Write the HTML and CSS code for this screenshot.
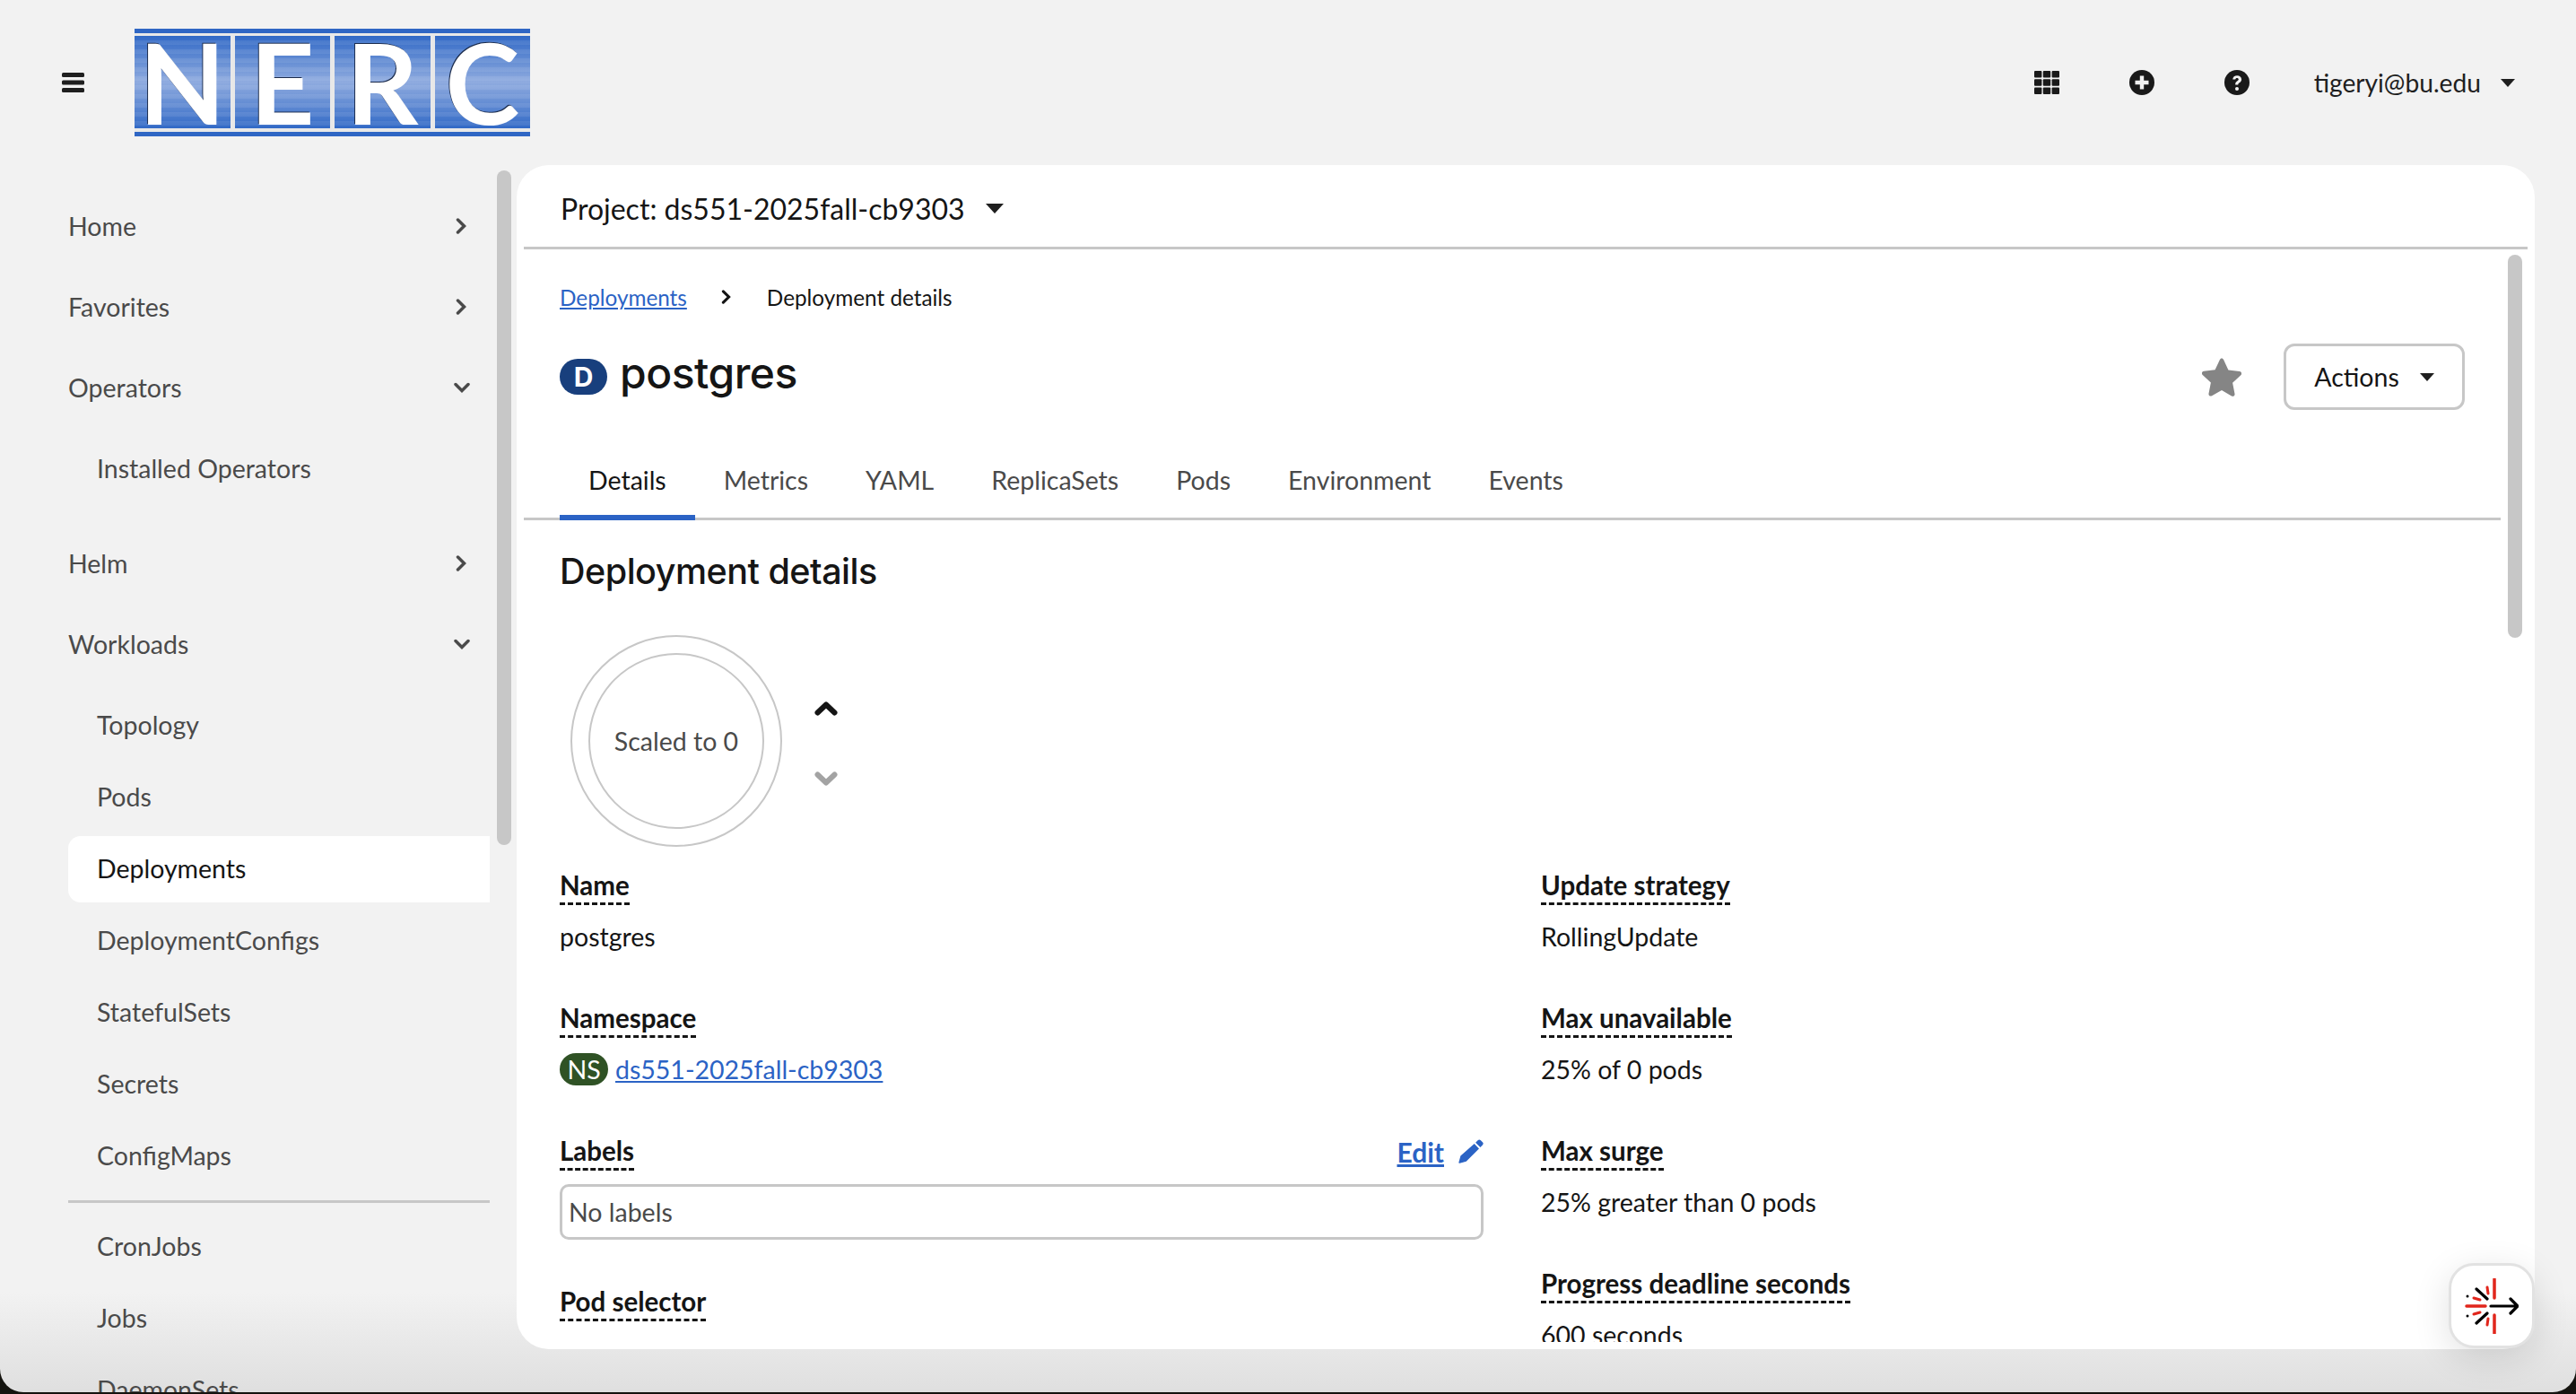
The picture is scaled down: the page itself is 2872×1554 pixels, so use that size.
FILE: index.html
```html
<!DOCTYPE html>
<html lang="en">
<head>
    <meta charset="UTF-8" />
    <title>postgres · Deployment details</title>
    <link rel="stylesheet" href="styles.css">
</head>
<body>
<div class="shell">
    <header class="masthead">
        <div class="masthead-left">
            <svg class="hamburger" viewBox="0 0 25 22"><rect width="25" height="5" rx="1.5"/><rect y="8.5" width="25" height="5" rx="1.5"/><rect y="17" width="25" height="5" rx="1.5"/></svg>
            <div class="logo">
                <span class="logo-letter">N</span><span class="logo-letter">E</span><span class="logo-letter">R</span><span class="logo-letter">C</span>
            </div>
        </div>
        <div class="masthead-right">
            <svg class="tool-icon" viewBox="0 0 28 26"><g><rect x="0" width="8.4" height="7.6" rx="1"/><rect x="9.8" width="8.4" height="7.6" rx="1"/><rect x="19.6" width="8.4" height="7.6" rx="1"/><rect x="0" y="9.2" width="8.4" height="7.6" rx="1"/><rect x="9.8" y="9.2" width="8.4" height="7.6" rx="1"/><rect x="19.6" y="9.2" width="8.4" height="7.6" rx="1"/><rect x="0" y="18.4" width="8.4" height="7.6" rx="1"/><rect x="9.8" y="18.4" width="8.4" height="7.6" rx="1"/><rect x="19.6" y="18.4" width="8.4" height="7.6" rx="1"/></g></svg>
            <svg class="tool-icon" viewBox="0 0 28 28"><circle cx="14" cy="14" r="14"/><path d="M11.8 6.5h4.4v5.3h5.3v4.4h-5.3v5.3h-4.4v-5.3H6.5v-4.4h5.3z" fill="#f2f2f2"/></svg>
            <svg class="tool-icon" viewBox="0 0 28 28"><circle cx="14" cy="14" r="14"/><path d="M9.2 10.6c.2-2.8 2.3-4.3 5-4.3 2.8 0 4.900 1.700 4.900 4.200 0 2-1.200 3-2.400 3.800-1 .7-1.400 1.100-1.400 2.200h-3.100c-.1-2 .6-3 1.900-3.900 1-.7 1.700-1.200 1.700-2.100 0-1-.7-1.600-1.700-1.600-1.100 0-1.800.7-1.900 1.700z" fill="#f2f2f2"/><circle cx="14" cy="21" r="2" fill="#f2f2f2"/></svg>
            <div class="user-menu">tigeryi@bu.edu<span class="caret caret-user"></span></div>
        </div>
    </header>

    <nav class="sidebar">
        <div class="nav-scroll"></div>
        <ul class="nav-list">
            <li class="nav-group">Home<svg class="chev" viewBox="0 0 12 18"><path d="M2.500 2l7 7-7 7" /></svg></li>
            <li class="nav-group">Favorites<svg class="chev" viewBox="0 0 12 18"><path d="M2.500 2l7 7-7 7" /></svg></li>
            <li class="nav-group">Operators<svg class="chev chev-down" viewBox="0 0 18 12"><path d="M2 2.500l7 7 7-7" /></svg></li>
            <li class="nav-item">Installed Operators</li>
            <li class="nav-group nav-group-after">Helm<svg class="chev" viewBox="0 0 12 18"><path d="M2.500 2l7 7-7 7" /></svg></li>
            <li class="nav-group">Workloads<svg class="chev chev-down" viewBox="0 0 18 12"><path d="M2 2.500l7 7 7-7" /></svg></li>
            <li class="nav-item">Topology</li>
            <li class="nav-item">Pods</li>
            <li class="nav-item nav-active">Deployments</li>
            <li class="nav-item">DeploymentConfigs</li>
            <li class="nav-item">StatefulSets</li>
            <li class="nav-item">Secrets</li>
            <li class="nav-item">ConfigMaps</li>
            <li class="nav-divider"></li>
            <li class="nav-item">CronJobs</li>
            <li class="nav-item">Jobs</li>
            <li class="nav-item">DaemonSets</li>
        </ul>
    </nav>

    <main class="card">
        <div class="project-bar">
            <span>Project: ds551-2025fall-cb9303</span><span class="caret caret-project"></span>
        </div>
        <div class="card-body">
            <div class="page-scroll"></div>
            <div class="breadcrumb">
                <a href="#">Deployments</a>
                <svg class="crumb-chev" viewBox="0 0 12 18"><path d="M2.500 2l7 7-7 7" /></svg>
                <span>Deployment details</span>
            </div>
            <div class="title-row">
                <h1 class="title"><span class="badge badge-d">D</span>postgres</h1>
                <div class="title-actions">
                    <svg class="star" viewBox="0 0 46 44"><path d="M23 1.500c1 0 1.700.6 2.100 1.500l5.300 11.600 12.500 1.500c2.100.3 2.900 2.700 1.400 4.100l-9.200 8.500 2.400 12.300c.4 2-1.700 3.500-3.500 2.500L23 37.100l-11 6.100c-1.800 1-3.900-.5-3.500-2.500l2.400-12.300-9.200-8.500c-1.500-1.400-.7-3.800 1.400-4.100l12.500-1.500L20.900 3c.4-.9 1.100-1.500 2.100-1.500z"/></svg>
                    <button class="actions-btn">Actions<span class="caret caret-actions"></span></button>
                </div>
            </div>
            <ul class="tabs">
                <li class="tab tab-active">Details</li>
                <li class="tab">Metrics</li>
                <li class="tab">YAML</li>
                <li class="tab">ReplicaSets</li>
                <li class="tab">Pods</li>
                <li class="tab">Environment</li>
                <li class="tab">Events</li>
            </ul>
            <h2 class="section-title">Deployment details</h2>
            <div class="pod-ring-row">
                <div class="pod-ring">
                    <div class="pod-ring-inner">Scaled to 0</div>
                </div>
                <div class="scalers">
                    <svg class="scaler" viewBox="0 0 26 16"><path d="M3.500 12.500l9.500-9 9.500 9"/></svg>
                    <svg class="scaler scaler-off" viewBox="0 0 26 16"><path d="M3.500 3.500l9.500 9 9.500-9"/></svg>
                </div>
            </div>
            <div class="details-grid">
                <div class="details-col">
                    <div class="field">
                        <div class="field-label"><span class="term">Name</span></div>
                        <div class="field-value">postgres</div>
                    </div>
                    <div class="field">
                        <div class="field-label"><span class="term">Namespace</span></div>
                        <div class="field-value"><span class="badge badge-ns">NS</span><a href="#">ds551-2025fall-cb9303</a></div>
                    </div>
                    <div class="field field-labels">
                        <div class="field-label"><span class="term">Labels</span>
                            <a href="#" class="edit-link"><span>Edit</span><svg class="pencil" viewBox="0 0 28 28"><path d="M21.600 1.200a2.400 2.400 0 0 1 3.300 0l2 2a2.400 2.400 0 0 1 0 3.300l-2.500 2.500-5.300-5.300zM17.700 5.100l5.300 5.300L8.700 24.700l-7.300 2.100a.8.8 0 0 1-1-1l2-7.400z"/></svg></a>
                        </div>
                        <div class="labels-box">No labels</div>
                    </div>
                    <div class="field">
                        <div class="field-label"><span class="term">Pod selector</span></div>
                    </div>
                </div>
                <div class="details-col">
                    <div class="field">
                        <div class="field-label"><span class="term">Update strategy</span></div>
                        <div class="field-value">RollingUpdate</div>
                    </div>
                    <div class="field">
                        <div class="field-label"><span class="term">Max unavailable</span></div>
                        <div class="field-value">25% of 0 pods</div>
                    </div>
                    <div class="field">
                        <div class="field-label"><span class="term">Max surge</span></div>
                        <div class="field-value">25% greater than 0 pods</div>
                    </div>
                    <div class="field">
                        <div class="field-label"><span class="term">Progress deadline seconds</span></div>
                        <div class="field-value">600 seconds</div>
                    </div>
                </div>
            </div>
        </div>
        <div class="assist-fab">
            <svg viewBox="0 0 60 62" class="assist-icon">
                <g class="assist-red">
                    <path d="M33 1v21M33 41v21M2 31h21"/>
                    <path d="M25 10l1 7M10 22l7 2M10 40l7-2M25 52l1-7" class="assist-thin"/>
                </g>
                <g class="assist-black">
                    <path d="M13 12l12 11M13 50l12-11M29 31h30M51 23l8 8-8 8"/>
                    <circle cx="3" cy="20" r="1.500"/>
                    <circle cx="3" cy="42" r="1.500"/>
                </g>
            </svg>
        </div>
    </main>
</div>
</body>
</html>
```
FILE: styles.css
```css
* {
    box-sizing: border-box;
}
html, body {
    margin: 0;
    height: 100%;
    background-color: #15140f;
    overflow: hidden;
}
body {
    font-family: Lato, "Noto Sans", sans-serif;
    font-size: 28.5px;
    color: #151515;
}
a {
    color: #2b63c5;
}
ul {
    list-style: none;
    margin: 0;
    padding: 0;
}
.shell {
    height: 1552px;
    display: grid;
    grid-template-columns: 576px 1fr;
    grid-template-rows: 184px 1320px 1fr;
    padding-right: 46px;
    background: linear-gradient(#f2f2f2 1440px, #dfdfdf 1552px);
    border-radius: 0 0 26px 26px;
    overflow: hidden;
}

/* top bar */
.masthead {
    grid-column: 1 / 3;
    display: flex;
    justify-content: space-between;
    align-items: flex-start;
    padding: 32px 22px 0 69px;
}
.masthead-left {
    display: flex;
    align-items: center;
    gap: 56px;
    height: 120px;
}
.hamburger {
    width: 25px;
    height: 22px;
    fill: #1f1f1f;
}
.logo {
    width: 441px;
    height: 120px;
    display: grid;
    grid-template-columns: repeat(4, 1fr);
    grid-template-rows: 103px;
    gap: 5px;
    padding: 3px 0 4px;
    border-top: 5px solid #2f66c4;
    border-bottom: 5px solid #2f66c4;
    background-color: #e8e8e8;
}
.logo-letter {
    display: block;
    text-align: center;
    font-family: Lato, sans-serif;
    font-weight: 700;
    font-size: 125px;
    line-height: 103px;
    color: #fff;
    text-shadow: -1px -1px 0 #1c2c4c;
    background: repeating-linear-gradient(#0000 0 5px, #ffffff14 5px 10px), linear-gradient(#3169c6, #8fabdf 50%, #3169c6);
}
.masthead-right {
    display: flex;
    align-items: center;
    height: 120px;
}
.tool-icon {
    width: 28px;
    height: 28px;
    fill: #1a1a1a;
    margin-right: 78px;
}
.user-menu {
    display: flex;
    align-items: center;
    color: #1f1f1f;
    margin-left: -6px;
    font-size: 28.2px;
}
.caret {
    display: inline-block;
    border-left: 8px solid transparent;
    border-right: 8px solid transparent;
    border-top: 9px solid #1f1f1f;
}
.caret-user {
    margin-left: 22px;
}

/* left nav */
.sidebar {
    grid-row: 2 / 4;
    position: relative;
    overflow: hidden;
    padding-top: 24px;
}
.nav-scroll {
    position: absolute;
    left: 554px;
    top: 6px;
    width: 16px;
    height: 752px;
    border-radius: 8px;
    background-color: #c7c7c7;
}
.nav-list {
    width: 470px;
    margin-left: 76px;
    color: #4a4a4a;
}
.nav-group {
    height: 90px;
    display: flex;
    align-items: center;
    justify-content: space-between;
    padding: 0 26px 3px 0;
}
.nav-group-after {
    margin-top: 21px;
}
.nav-item {
    height: 80px;
    display: flex;
    align-items: center;
    padding: 0 0 3px 32px;
}
.nav-group + .nav-item {
    margin-top: 5px;
}
.nav-active {
    height: 74px;
    margin: 3px 0;
    background-color: #fff;
    border-radius: 14px 0 0 14px;
    color: #151515;
}
.nav-divider {
    height: 3px;
    margin: 9px 0;
    background-color: #c7c7c7;
}
.chev {
    width: 12px;
    height: 18px;
    fill: none;
    stroke: #4a4a4a;
    stroke-width: 3.500;
    stroke-linecap: round;
}
.chev-down {
    width: 18px;
    height: 12px;
    margin-right: -4px;
}

/* main card */
.card {
    position: relative;
    background-color: #fff;
    border-radius: 36px;
    display: flex;
    flex-direction: column;
    min-height: 0;
}
.project-bar {
    height: 94px;
    flex: none;
    margin: 0 8px;
    padding: 6px 0 0 41px;
    display: flex;
    align-items: center;
    border-bottom: 3px solid #c7c7c7;
    font-size: 32px;
}
.caret-project {
    margin-left: 23px;
    border-left-width: 10px;
    border-right-width: 10px;
    border-top-width: 11px;
}
.card-body {
    position: relative;
    flex: 1;
    min-height: 0;
    overflow: hidden;
    margin-bottom: 8px;
    padding: 0 0 0 48px;
}
.page-scroll {
    position: absolute;
    left: 2220px;
    top: 6px;
    width: 16px;
    height: 427px;
    border-radius: 8px;
    background-color: #c7c7c7;
}
.breadcrumb {
    display: flex;
    align-items: center;
    height: 36px;
    margin-top: 35px;
    font-size: 24.300px;
}
.crumb-chev {
    width: 11px;
    height: 16px;
    margin: 0 40px 0 38px;
    fill: none;
    stroke: #151515;
    stroke-width: 3.500;
    stroke-linecap: round;
}
.title-row {
    display: flex;
    justify-content: space-between;
    align-items: center;
    margin-top: 32px;
    padding-right: 78px;
    height: 78px;
}
.title {
    display: flex;
    align-items: center;
    margin: 0 0 10px;
    font-family: Inter, Lato, sans-serif;
    font-size: 48px;
    font-weight: 500;
    letter-spacing: -0.5px;
}
.badge {
    display: inline-flex;
    align-items: center;
    justify-content: center;
    color: #fff;
    flex: none;
}
.badge-d {
    width: 53px;
    height: 40px;
    border-radius: 20px;
    margin: 10px 14px 0 0;
    background-color: #183f7d;
    font-size: 30px;
    font-weight: 700;
    letter-spacing: 0;
}
.title-actions {
    display: flex;
    align-items: center;
    gap: 46px;
}
.star {
    width: 46px;
    height: 44px;
    fill: #858585;
}
.actions-btn {
    display: flex;
    align-items: center;
    justify-content: center;
    width: 202px;
    height: 74px;
    border: 3px solid #c7c7c7;
    border-radius: 12px;
    background-color: #fff;
    font: inherit;
    color: #151515;
}
.caret-actions {
    margin-left: 23px;
}
.tabs {
    display: flex;
    margin: 33px 38px 0 -40px;
    padding-left: 40px;
    height: 88px;
    border-bottom: 3px solid #c7c7c7;
}
.tab {
    padding: 0 32px 3px;
    display: flex;
    align-items: center;
    color: #4a4a4a;
    height: 88px;
}
.tab-active {
    color: #151515;
    border-bottom: 6px solid #2b63c5;
    padding-top: 3px;
    padding-bottom: 0;
}
.section-title {
    margin: 32px 0 0;
    font-family: Inter, Lato, sans-serif;
    font-size: 39.500px;
    font-weight: 500;
    letter-spacing: -0.5px;
    line-height: 50px;
}
.pod-ring-row {
    display: flex;
    align-items: center;
    margin: 46px 0 0 12px;
}
.pod-ring {
    width: 236px;
    height: 236px;
    padding: 18px;
    border: 2px solid #c7c7c7;
    border-radius: 50%;
    flex: none;
}
.pod-ring-inner {
    height: 100%;
    border: 2px solid #c7c7c7;
    border-radius: 50%;
    display: flex;
    align-items: center;
    justify-content: center;
    color: #4a4a4a;
}
.scalers {
    display: flex;
    flex-direction: column;
    gap: 62px;
    margin-left: 36px;
    margin-top: 6px;
}
.scaler {
    width: 26px;
    height: 16px;
    fill: none;
    stroke: #151515;
    stroke-width: 6;
    stroke-linecap: round;
    stroke-linejoin: round;
}
.scaler-off {
    stroke: #a3a3a3;
}
.details-grid {
    display: grid;
    grid-template-columns: 1030px 1fr;
    column-gap: 64px;
    margin-top: 26px;
}
.field {
    height: 148px;
}
.field-labels {
    height: 168px;
}
.field-label {
    display: flex;
    justify-content: space-between;
    align-items: flex-start;
    font-weight: 700;
    height: 46px;
}
.term {
    height: 39px;
    line-height: 34px;
    font-size: 29.500px;
    border-bottom: 3px dashed #151515;
}
.field-value {
    display: flex;
    align-items: center;
    gap: 8px;
    margin-top: 10px;
    height: 36px;
}
.badge-ns {
    width: 54px;
    height: 36px;
    border-radius: 18px;
    background-color: #2f5225;
}
.edit-link {
    display: flex;
    align-items: center;
    gap: 16px;
    font-weight: 700;
    font-size: 30px;
}
.pencil {
    width: 28px;
    height: 28px;
    fill: #2b63c5;
}
.labels-box {
    height: 62px;
    margin-top: 8px;
    padding: 0 7px;
    display: flex;
    align-items: center;
    border: 3px solid #c7c7c7;
    border-radius: 10px;
    color: #4a4a4a;
}

/* floating assistant button */
.assist-fab {
    position: absolute;
    right: 0;
    bottom: 1px;
    width: 96px;
    height: 95px;
    display: flex;
    align-items: center;
    justify-content: center;
    background-color: #fff;
    border: 3px solid #e2e2e2;
    border-radius: 28px;
    box-shadow: 0 10px 40px rgba(0, 0, 0, 0.12);
}
.assist-icon {
    width: 60px;
    height: 62px;
    fill: none;
    stroke-linecap: round;
    stroke-linejoin: round;
}
.assist-red {
    stroke: #e1261c;
    stroke-width: 3.500;
}
.assist-thin {
    stroke-width: 3;
}
.assist-black {
    stroke: #000;
    stroke-width: 3.200;
}
.assist-black circle {
    fill: #000;
    stroke: none;
}
```
